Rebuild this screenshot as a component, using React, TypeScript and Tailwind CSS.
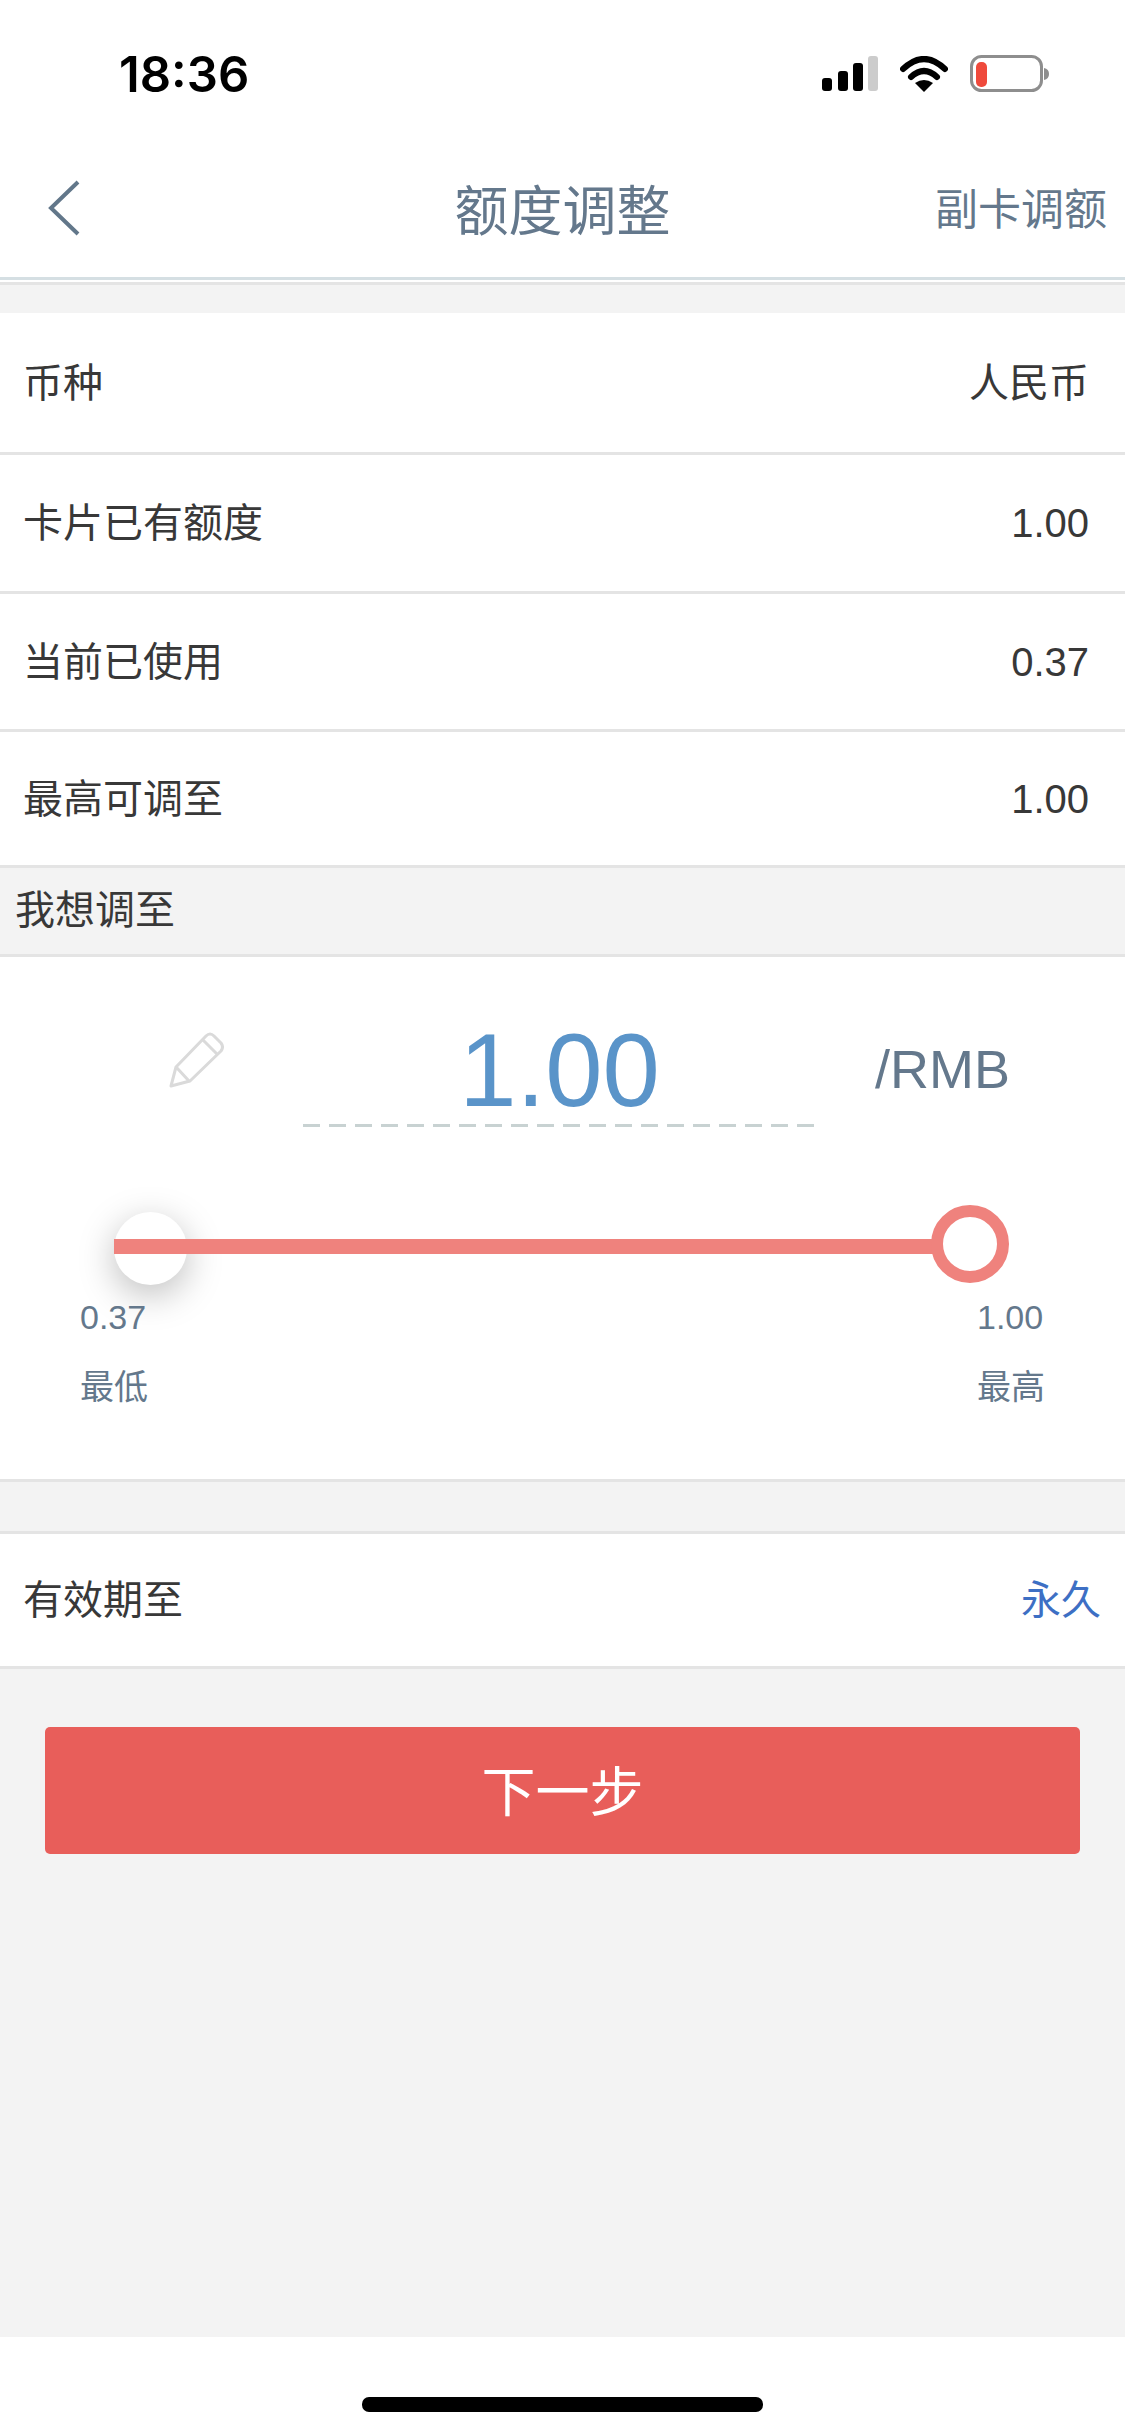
const cjk = 'font-["Liberation_Sans","Noto_Sans_CJK_SC",sans-serif]';

function StatusIcons() {
  return (
    <div className="flex items-center">
      {/* signal bars */}
      <svg width="56" height="36" viewBox="0 0 56 36" className="block">
        <rect x="0" y="22" width="10" height="13" rx="3" fill="#000" />
        <rect x="16" y="15" width="10" height="20" rx="3" fill="#000" />
        <rect x="31" y="7" width="10" height="28" rx="3" fill="#000" />
        <rect x="46" y="0" width="10" height="35" rx="3" fill="#ccc" />
      </svg>
      {/* wifi */}
      <svg width="48" height="36" viewBox="0 0 48 36" className="block ml-[22px]">
        <path d="M3 13 Q24 -7 45 13" fill="none" stroke="#000" strokeWidth="6" strokeLinecap="round" />
        <path d="M11 21 Q24 9 37 21" fill="none" stroke="#000" strokeWidth="6" strokeLinecap="round" />
        <path d="M15 27 Q24 21 33 27 L24 36 Z" fill="#000" />
      </svg>
      {/* battery */}
      <svg width="79" height="38" viewBox="0 0 79 38" className="block ml-[22px]">
        <rect x="1.5" y="1.5" width="70" height="34" rx="10" fill="#fff" stroke="#8e8e8e" strokeWidth="3" />
        <rect x="6" y="7" width="11" height="25" rx="5" fill="#ef4a3c" />
        <path d="M74 13 Q79 14 79 19 Q79 24 74 25 Z" fill="#8e8e8e" />
      </svg>
    </div>
  );
}

function Row({
  label,
  value,
  heightClass,
  valueClass = "text-[#383838] pr-[36px]",
}: {
  label: string;
  value: string;
  heightClass: string;
  valueClass?: string;
}) {
  return (
    <div className={`flex ${heightClass} items-center justify-between bg-white pl-[23px] border-b-[3px] border-[#e4e4e4] text-[40px]`}>
      <span className="text-[#383838]">{label}</span>
      <span className={valueClass}>{value}</span>
    </div>
  );
}

export default function App() {
  return (
    <div className={`flex h-[2435px] w-[1125px] flex-col bg-[#f3f3f3] ${cjk}`}>
      {/* status bar */}
      <div className="flex h-[137px] items-start justify-between bg-white pl-[119px] pr-[76px] pt-[55px]">
        <span className="font-['Inter'] text-[49px] font-semibold leading-[40px] text-black">18:36</span>
        <StatusIcons />
      </div>

      {/* navigation bar */}
      <div className="grid h-[140px] grid-cols-[1fr_auto_1fr] items-center bg-white pt-[4px]">
        <svg width="34" height="56" viewBox="0 0 34 56" className="mb-[3px] ml-[47px] block">
          <path d="M31 2 L4 28 L31 54" fill="none" stroke="#62778a" strokeWidth="4" />
        </svg>
        <span className="mt-[6px] text-[54px] leading-none text-[#64788c]">额度调整</span>
        <span className="mt-[3px] justify-self-end pr-[18px] text-[43px] leading-none text-[#64788c]">副卡调额</span>
      </div>
      <div className="h-[3px] bg-[#d5dfe3]" />
      <div className="h-[2px] bg-white" />
      <div className="h-[3px] bg-[#e4e4e4]" />
      <div className="h-[28px]" />

      {/* card summary */}
      <Row label="币种" value="人民币" heightClass="h-[142px]" />
      <Row label="卡片已有额度" value="1.00" heightClass="h-[139px]" />
      <Row label="当前已使用" value="0.37" heightClass="h-[138px]" />
      <div className="flex h-[133px] items-center justify-between bg-white pl-[23px] pr-[36px] text-[40px] text-[#383838]">
        <span>最高可调至</span>
        <span>1.00</span>
      </div>

      {/* desired amount heading */}
      <div className="flex h-[92px] items-center border-y-[3px] border-[#e4e4e4] pb-[3px] pl-[15px] text-[40px] text-[#383838]">我想调至</div>

      {/* amount editor */}
      <div className="h-[525px] border-b-[3px] border-[#e4e4e4] bg-white">
        <div className="flex items-start pl-[168px] pt-[74px]">
          <svg width="56" height="58" viewBox="0 0 56 58" className="block">
            <path
              d="M3 55 L8 36 L38 5 Q42 1 46 5 L53 12 Q56 16 53 20 L22 50 Z M9 37 L21 50 M34 8 L49 23"
              fill="none"
              stroke="#dadada"
              strokeWidth="3"
              strokeLinejoin="round"
            />
          </svg>
          <div className="ml-[79px] w-[511px]">
            <div className="h-[78px] pl-[2px] pt-[1px] text-center text-[103px] leading-[78px] text-[#5a94c9]">1.00</div>
            <div className="mt-[15px] h-[3px] bg-[repeating-linear-gradient(90deg,#c8d2d2_0,#c8d2d2_17px,transparent_17px,transparent_26px)]" />
          </div>
          <span className="ml-[61px] mt-[4px] text-[54px] leading-[68px] text-[#64788c]">/RMB</span>
        </div>

        {/* range slider */}
        <div className="relative ml-[114px] mt-[78px] h-[78px] w-[895px] pt-[34px]">
          <div className="absolute left-0 top-[7px] h-[73px] w-[73px] rounded-full bg-white shadow-[0_10px_36px_rgba(0,0,0,0.26)]" />
          <div className="relative h-[15px] w-[825px] bg-[#ef827d]" />
          <div className="absolute right-0 top-0 h-[78px] w-[78px] rounded-full border-[12px] border-[#ef827d] bg-white" />
        </div>

        <div className="relative mt-[14px] flex justify-between pl-[80px] pr-[80px] text-[34px] leading-[40px] text-[#64788c]">
          <div className="flex flex-col gap-[30px]">
            <span>0.37</span>
            <span>最低</span>
          </div>
          <div className="flex flex-col gap-[30px]">
            <span>1.00</span>
            <span>最高</span>
          </div>
        </div>
      </div>

      <div className="h-[52px] border-b-[3px] border-[#e4e4e4]" />

      {/* expiry */}
      <Row label="有效期至" value="永久" heightClass="h-[135px]" valueClass="text-[#3d6fc4] pr-[24px]" />

      {/* next step */}
      <div className="px-[45px] pt-[58px]">
        <div className="flex h-[127px] items-center justify-center rounded-[5px] bg-[#e85e5a] pt-[5px] text-[54px] text-white">下一步</div>
      </div>

      <div className="flex-1" />

      {/* home indicator */}
      <div className="flex h-[98px] justify-center bg-white pt-[60px]">
        <div className="h-[15px] w-[401px] rounded-[7px] bg-black" />
      </div>
    </div>
  );
}
